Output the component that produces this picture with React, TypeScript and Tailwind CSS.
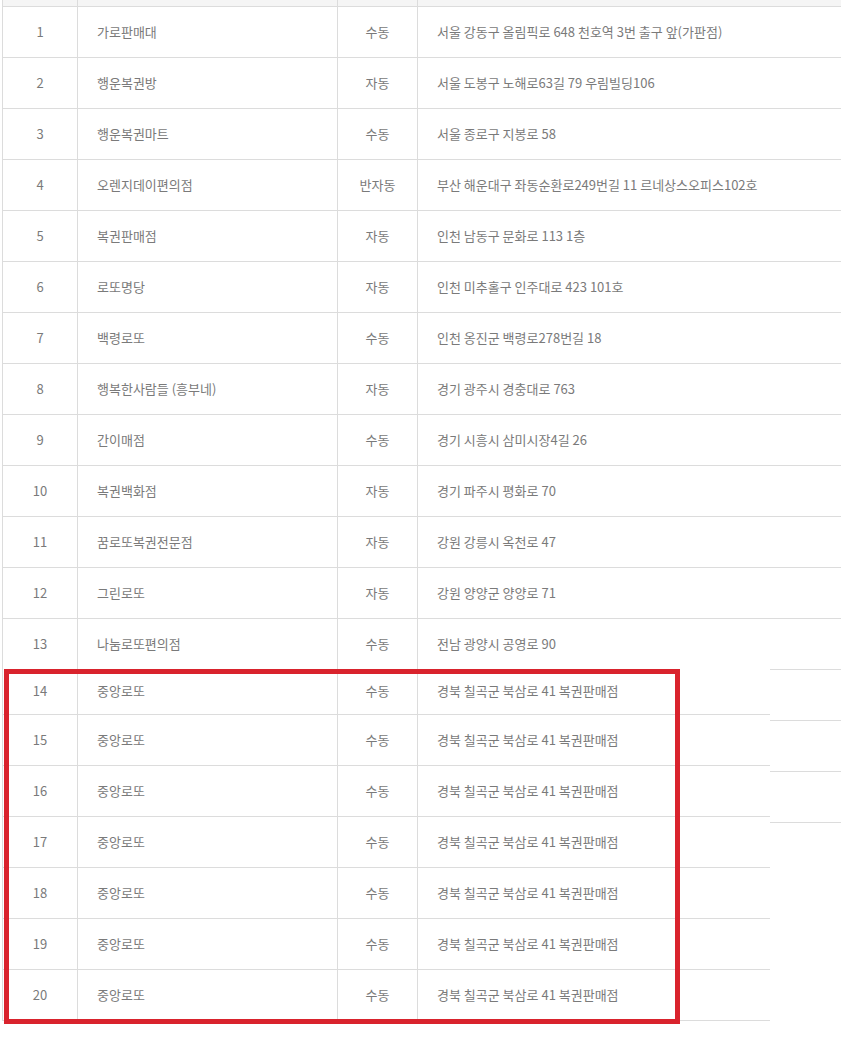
import React from "react";

type Row = [string, string, string, string];

const top: Row[] = [
  ["1", "가로판매대", "수동", "서울 강동구 올림픽로 648 천호역 3번 출구 앞(가판점)"],
  ["2", "행운복권방", "자동", "서울 도봉구 노해로63길 79 우림빌딩106"],
  ["3", "행운복권마트", "수동", "서울 종로구 지봉로 58"],
  ["4", "오렌지데이편의점", "반자동", "부산 해운대구 좌동순환로249번길 11 르네상스오피스102호"],
  ["5", "복권판매점", "자동", "인천 남동구 문화로 113 1층"],
  ["6", "로또명당", "자동", "인천 미추홀구 인주대로 423 101호"],
  ["7", "백령로또", "수동", "인천 옹진군 백령로278번길 18"],
  ["8", "행복한사람들 (흥부네)", "자동", "경기 광주시 경충대로 763"],
  ["9", "간이매점", "수동", "경기 시흥시 삼미시장4길 26"],
  ["10", "복권백화점", "자동", "경기 파주시 평화로 70"],
  ["11", "꿈로또복권전문점", "자동", "강원 강릉시 옥천로 47"],
  ["12", "그린로또", "자동", "강원 양양군 양양로 71"],
  ["13", "나눔로또편의점", "수동", "전남 광양시 공영로 90"],
];

const bottom: Row[] = [14, 15, 16, 17, 18, 19, 20].map((n) => [
  String(n),
  "중앙로또",
  "수동",
  "경북 칠곡군 북삼로 41 복권판매점",
]);

function Cells({ r }: { r: Row }) {
  return (
    <>
      <div className="w-[75px] shrink-0 border-r border-[#dcdcdc] flex items-center justify-center">{r[0]}</div>
      <div className="w-[260px] shrink-0 border-r border-[#dcdcdc] flex items-center pl-[19px]">{r[1]}</div>
      <div className="w-[80px] shrink-0 border-r border-[#dcdcdc] flex items-center justify-center">{r[2]}</div>
      <div className="flex-1 flex items-center pl-[19px] whitespace-nowrap">{r[3]}</div>
    </>
  );
}

export default function App() {
  return (
    <div
      className="w-[841px] h-[1060px] overflow-hidden bg-white text-[#7a7a7a] text-[13px]"
      style={{ fontFamily: '"Noto Sans CJK KR", "Noto Sans", sans-serif' }}
    >
      {/* upper table */}
      <div className="ml-[2px] w-[900px] border-l border-[#dcdcdc]">
        <div className="flex h-[7px] bg-[#f5f5f5] border-b border-[#dcdcdc]">
          <div className="w-[75px] border-r border-[#dcdcdc]" />
          <div className="w-[260px] border-r border-[#dcdcdc]" />
          <div className="w-[80px] border-r border-[#dcdcdc]" />
          <div className="flex-1" />
        </div>
        {top.map((r) => (
          <div key={r[0]} className="flex h-[51px] border-b border-[#dcdcdc]">
            <Cells r={r} />
          </div>
        ))}
      </div>

      {/* pasted lower capture */}
      <div className="relative -mt-[3px] flex">
        <div className="w-[770px] shrink-0 bg-white">
          <div className="ml-[2px] border-l border-[#dcdcdc]">
            {bottom.map((r, i) => (
              <div
                key={r[0]}
                className={`flex border-b border-[#dcdcdc] ${i === 0 ? "h-[48px]" : "h-[51px]"}`}
              >
                <Cells r={r} />
              </div>
            ))}
          </div>
        </div>
        <div className="flex-1">
          <div className="h-[54px] border-b border-[#dcdcdc]" />
          <div className="h-[51px] border-b border-[#dcdcdc]" />
          <div className="h-[51px] border-b border-[#dcdcdc]" />
        </div>
        <div className="absolute left-[4px] top-[2px] w-[676px] h-[355px] border-[5px] border-[#d9232d]" />
      </div>
    </div>
  );
}
